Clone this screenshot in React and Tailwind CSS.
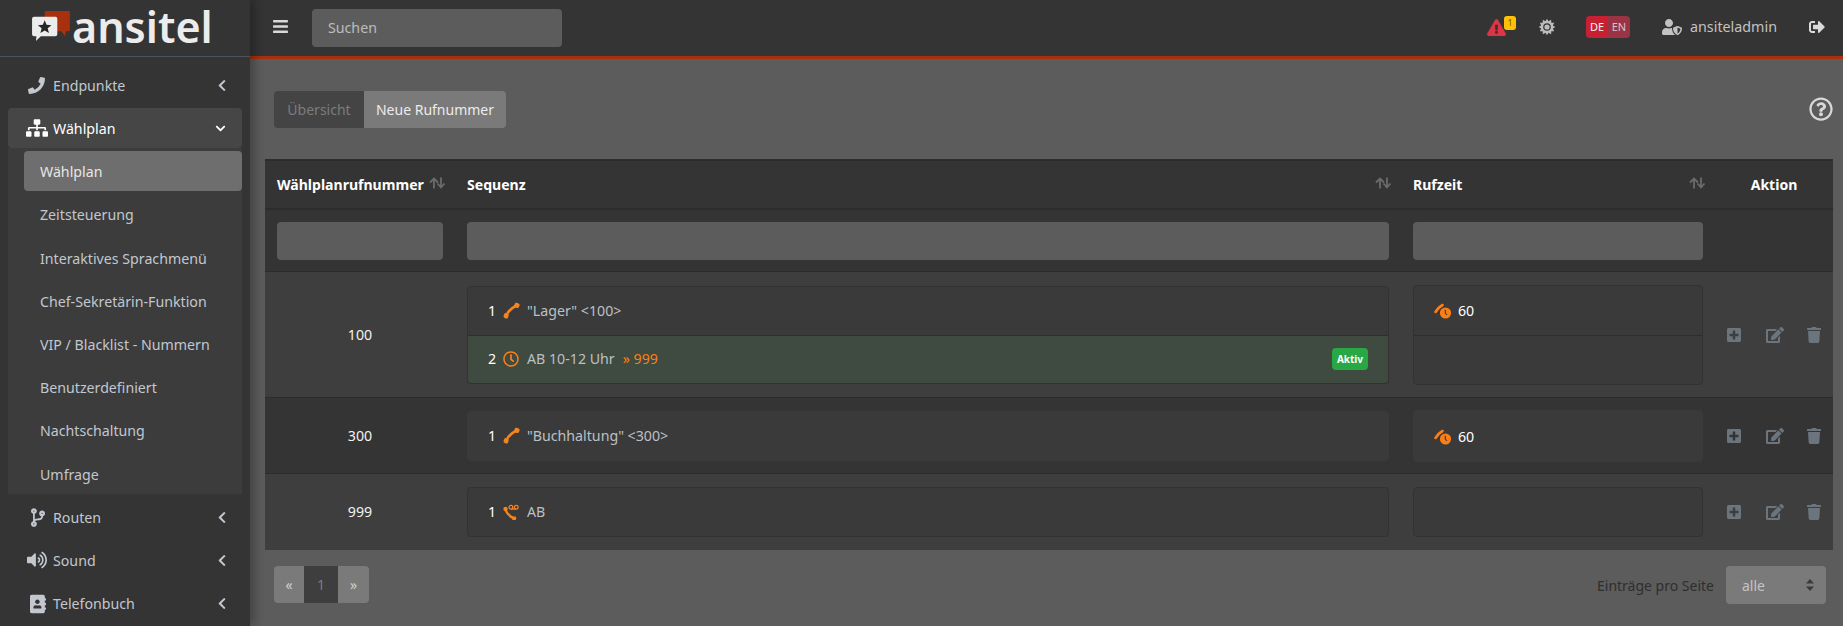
import React from "react";
import { FaPhoneAlt, FaSitemap, FaCodeBranch, FaVolumeUp, FaAddressBook, FaChevronLeft, FaChevronDown, FaBars, FaExclamationTriangle, FaUserShield, FaSignOutAlt, FaRegQuestionCircle, FaPlusSquare, FaEdit, FaTrash, FaRegClock } from "react-icons/fa";

function Handset({ className }) {
  return (
    <svg viewBox="0 0 18 18" className={className} fill="none">
      <path d="M3.5 14 C5.5 10 9 6.5 14 4" stroke="currentColor" strokeWidth="2.8" strokeLinecap="round" />
      <rect x="0.8" y="11.8" width="5" height="5.4" rx="1.8" fill="currentColor" transform="rotate(20 3 14.5)" />
      <rect x="12" y="1" width="5.4" height="5" rx="1.8" fill="currentColor" transform="rotate(20 14.5 3.5)" />
    </svg>
  );
}

function VoicemailHandset({ className }) {
  return (
    <svg viewBox="0 0 18 18" className={className} fill="none">
      <path d="M2.5 6 C4 10 7 13 11 15" stroke="currentColor" strokeWidth="2.6" strokeLinecap="round" />
      <rect x="0.6" y="3.2" width="4.2" height="4.2" rx="1.4" fill="currentColor" />
      <rect x="9.6" y="13.2" width="4.4" height="3.8" rx="1.4" fill="currentColor" />
      <circle cx="8.4" cy="3.4" r="2" stroke="currentColor" strokeWidth="1.3" />
      <circle cx="14" cy="3.4" r="2" stroke="currentColor" strokeWidth="1.3" />
      <path d="M8.4 5.4 H14" stroke="currentColor" strokeWidth="1.3" />
    </svg>
  );
}

function TimeHandset({ className }) {
  return (
    <svg viewBox="0 0 18 16" className={className} fill="none">
      <path d="M1.5 9 C3 6.5 5 4 8.5 2" stroke="currentColor" strokeWidth="2.6" strokeLinecap="round" />
      <circle cx="11.5" cy="10" r="5.6" fill="currentColor" />
      <path d="M11.3 6.8 V10 L13 12" stroke="#3a3a3a" strokeWidth="1.1" />
    </svg>
  );
}

function SortArrows() {
  return (
    <svg viewBox="0 0 17 12" className="w-[17px] h-3 mb-1 text-[#6b6b6b]" fill="none" stroke="currentColor" strokeWidth="1.8">
      <path d="M5 11.5 V2 M1 5.5 L5 1.5 L9 5.5" />
      <path d="M12 0.5 V10 M8.5 6.5 L12 10.5 L15.5 6.5" />
    </svg>
  );
}

function Gear() {
  return (
    <svg viewBox="0 0 16 16" className="w-[18px] h-[18px] text-[#bdbdbd]" fill="currentColor">
      <path d="M8 0.6 L9.3 2.8 L11.7 1.6 L11.8 4.2 L14.4 4.3 L13.2 6.7 L15.4 8 L13.2 9.3 L14.4 11.7 L11.8 11.8 L11.7 14.4 L9.3 13.2 L8 15.4 L6.7 13.2 L4.3 14.4 L4.2 11.8 L1.6 11.7 L2.8 9.3 L0.6 8 L2.8 6.7 L1.6 4.3 L4.2 4.2 L4.3 1.6 L6.7 2.8 Z" />
      <circle cx="8" cy="8" r="3.4" fill="#343434" />
      <circle cx="8" cy="8" r="2.3" />
    </svg>
  );
}

function Logo() {
  return (
    <svg viewBox="0 0 40 34" className="w-[39px] h-[33px] shrink-0 -mt-[3px]">
      <path d="M14 2 Q14 1 15 1 H39 Q40 1 40 2 V20 Q40 22 38 22 H36 L35 27 L31 22 H14 Z" fill="#a8300e" />
      <path d="M3 7 H25 Q27 7 27 9 V25 Q27 27 25 27 H10 L5 32 L5.5 27 H3 Q1 27 1 25 V9 Q1 7 3 7 Z" fill="#ececec" />
      <path d="M14 10.5 L15.9 15.3 L21 15.6 L17.1 18.8 L18.4 23.8 L14 21 L9.6 23.8 L10.9 18.8 L7 15.6 L12.1 15.3 Z" fill="#262626" />
    </svg>
  );
}

function NavItem({ icon, label }) {
  return (
    <div className="h-10 mb-[3.2px] flex items-center pl-5 pr-[15px] text-[#c2c7d0]">
      <span className="w-[25px] flex justify-start">{icon}</span>
      <span className="text-[14.2px] pt-[1px] flex-1">{label}</span>
      <FaChevronLeft className="w-[10px] h-[13px]" />
    </div>
  );
}

function SubItem({ label, active }) {
  return (
    <div className={"h-10 mb-[3.2px] ml-4 pl-[16px] pt-[1px] flex items-center rounded text-[14.2px] " + (active ? "bg-[#6e6e6e] text-[#e6e6e6]" : "text-[#c2c7d0]")}>
      {label}
    </div>
  );
}

function Sidebar() {
  return (
    <aside className="w-[250px] shrink-0 h-[626px] overflow-hidden bg-[#343434] shadow-[4px_0_10px_rgba(0,0,0,0.3)] z-10">
      <div className="h-[57px] flex items-center pl-[31px] gap-[2px] border-b border-[#4b545c]">
        <Logo />
        <span className="text-[43px] leading-[50px] font-semibold text-[#ececec] -mt-[2px]">ansitel</span>
      </div>
      <div className="pt-2 px-2">
        <NavItem icon={<FaPhoneAlt className="w-[17px] h-[17px] -scale-x-100" />} label="Endpunkte" />
        <div className="bg-[#464646] rounded h-10 flex items-center pl-[18px] pr-[15px] text-white">
          <span className="w-[27px]"><FaSitemap className="w-[22px] h-[18px]" /></span>
          <span className="text-[14.2px] pt-[1px] flex-1">Wählplan</span>
          <FaChevronDown className="w-[13px] h-[11px]" />
        </div>
        <div className="bg-[#3c3c3c] pt-[3.2px] h-[346px]">
          <SubItem label="Wählplan" active />
          <SubItem label="Zeitsteuerung" />
          <SubItem label="Interaktives Sprachmenü" />
          <SubItem label="Chef-Sekretärin-Funktion" />
          <SubItem label="VIP / Blacklist - Nummern" />
          <SubItem label="Benutzerdefiniert" />
          <SubItem label="Nachtschaltung" />
          <SubItem label="Umfrage" />
        </div>
        <div className="h-[3px]" />
        <NavItem icon={<FaCodeBranch className="ml-[3px] w-[14px] h-[19px]" />} label="Routen" />
        <NavItem icon={<FaVolumeUp className="w-[20px] h-[18px] -ml-[1px]" />} label="Sound" />
        <NavItem icon={<FaAddressBook className="ml-[2px] w-[16px] h-[20px]" />} label="Telefonbuch" />
      </div>
    </aside>
  );
}

function Topbar() {
  return (
    <header className="h-[59px] shrink-0 bg-[#343434] border-b-[3px] border-[#a8300e] flex items-center">
      <FaBars className="ml-[23px] w-[15px] h-[17px] text-[#d8d8d8] -mt-1" />
      <div className="ml-[24px] w-[250px] h-[38px] rounded bg-[#5c5c5c] flex items-center px-[16px] text-[14.2px] text-[#bcbcbc] -mt-[1px]">Suchen</div>
      <div className="flex-1" />
      <div className="flex items-center -mt-[3px]">
        <div className="relative w-[51px] h-6">
          <FaExclamationTriangle className="absolute left-0 top-[4px] w-[19px] h-[17px] text-[#dc3545]" />
          <span className="absolute left-[17px] top-[1px] w-3 h-[14px] rounded-[3px] bg-[#ffc107] text-[#6b5a10] text-[9px] leading-[14px] text-center">1</span>
        </div>
        <Gear />
        <div className="ml-[30px] flex h-[22px] rounded overflow-hidden text-[11px] leading-[22px]">
          <span className="w-[22px] bg-[#c82033] text-[#f2f2f2] text-center">DE</span>
          <span className="w-[22px] bg-[#9a3344] text-[#d8c4c8] text-center">EN</span>
        </div>
        <FaUserShield className="ml-[32px] w-5 h-4 text-[#c2c2c2]" />
        <span className="ml-[8px] text-[14.3px] text-[#c2c2c2]">ansiteladmin</span>
        <FaSignOutAlt className="ml-[32px] mr-[18px] w-4 h-4 text-[#dadada]" />
      </div>
    </header>
  );
}

const cols = ["w-[190px]", "w-[946px]", "w-[314px]", "w-[118px]"];

function HeadCell({ w, label }) {
  return (
    <div className={w + " shrink-0 pl-3 pr-[9px] flex items-center justify-between"}>
      <span className="text-[14.05px] font-bold text-white">{label}</span>
      <SortArrows />
    </div>
  );
}

function Actions() {
  return (
    <div className={cols[3] + " shrink-0 flex items-center text-[#6c757d]"}>
      <FaPlusSquare className="ml-[12px] w-[14px] h-4" />
      <FaEdit className="ml-[25px] w-[18px] h-4" />
      <FaTrash className="ml-[23px] w-[14px] h-4" />
    </div>
  );
}

function SeqRow({ n, icon, text, extra, active, h, last }) {
  return (
    <div className={h + " flex items-center pl-5 pr-5 text-[14.2px] " + (active ? "bg-[#3f4a40] rounded-b" : "") + (last ? "" : " border-b border-[#2e2e2e]")}>
      <span className="text-white w-[15px]">{n}</span>
      <span className="w-[24px] flex items-center text-[#f6841e]">{icon}</span>
      <span className="text-[#bcc0c4]">{text}</span>
      {extra && <span className="ml-[8px] text-[#fd7e14]">{extra}</span>}
      {active && <span className="ml-auto w-9 h-[22px] rounded-[4px] bg-[#28a745] text-white text-[10px] font-bold leading-[22px] text-center">Aktiv</span>}
    </div>
  );
}

function Box({ className, children }) {
  return <div className={"rounded border bg-[#3a3a3a] overflow-hidden " + (className || "border-[#323232]")}>{children}</div>;
}

function RufZeit({ h }) {
  return (
    <div className={h + " flex items-center pl-5 pt-[2px] text-[14.2px] text-white"}>
      <TimeHandset className="w-[18px] h-[16px] text-[#fd7e14] mr-[6px]" />60
    </div>
  );
}

function Table() {
  return (
    <div className="ml-[15px] w-[1568px] bg-[#343434] text-[14.2px]">
      <div className="h-[51px] flex border-t-2 border-b-2 border-[#2c2c2c]">
        <HeadCell w={cols[0]} label="Wählplanrufnummer" />
        <HeadCell w={cols[1]} label="Sequenz" />
        <HeadCell w={cols[2]} label="Rufzeit" />
        <div className={cols[3] + " shrink-0 flex items-center justify-center text-[14.05px] font-bold text-white"}>Aktion</div>
      </div>
      <div className="h-[62px] flex items-center border-b border-[#2c2c2c]">
        <div className={cols[0] + " shrink-0 px-3"}><div className="h-[38px] rounded bg-[#5c5c5c] w-[166px]" /></div>
        <div className={cols[1] + " shrink-0 px-3"}><div className="h-[38px] rounded bg-[#5c5c5c]" /></div>
        <div className={cols[2] + " shrink-0 px-3"}><div className="h-[38px] rounded bg-[#5c5c5c]" /></div>
      </div>
      <div className="h-[126px] flex items-center bg-[#3e3e3e] border-b border-[#2c2c2c]">
        <div className={cols[0] + " shrink-0 text-center text-[#f2f2f2]"}>100</div>
        <div className={cols[1] + " shrink-0 px-3"}>
          <Box>
            <SeqRow n="1" icon={<Handset className="w-[17px] h-[17px]" />} text={'"Lager" <100>'} h="h-[49px]" />
            <SeqRow n="2" icon={<FaRegClock className="w-[16px] h-[16px] text-[#fd7e14]" />} text="AB 10-12 Uhr" extra="» 999" active h="h-[47px]" last />
          </Box>
        </div>
        <div className={cols[2] + " shrink-0 px-3"}>
          <Box>
            <RufZeit h="h-[49px]" />
            <div className="h-[49px] border-t border-[#2e2e2e]" />
          </Box>
        </div>
        <Actions />
      </div>
      <div className="h-[76px] flex items-center bg-[#343434] border-b border-[#2c2c2c]">
        <div className={cols[0] + " shrink-0 text-center text-[#f2f2f2]"}>300</div>
        <div className={cols[1] + " shrink-0 px-3"}>
          <Box className="border-transparent">
            <SeqRow n="1" icon={<Handset className="w-[17px] h-[17px]" />} text={'"Buchhaltung" <300>'} h="h-[48px]" last />
          </Box>
        </div>
        <div className={cols[2] + " shrink-0 px-3"}>
          <Box className="border-transparent"><RufZeit h="h-[50px]" /></Box>
        </div>
        <Actions />
      </div>
      <div className="h-[76px] flex items-center bg-[#3e3e3e]">
        <div className={cols[0] + " shrink-0 text-center text-[#f2f2f2]"}>999</div>
        <div className={cols[1] + " shrink-0 px-3"}>
          <Box>
            <SeqRow n="1" icon={<VoicemailHandset className="w-[17px] h-[17px]" />} text="AB" h="h-[48px]" last />
          </Box>
        </div>
        <div className={cols[2] + " shrink-0 px-3"}>
          <Box><div className="h-[48px]" /></Box>
        </div>
        <Actions />
      </div>
    </div>
  );
}

function Content() {
  return (
    <main className="flex-1 min-h-0 bg-[#5c5c5c]">
      <div className="pt-[32px] pl-[24px] pr-[14px] h-[100px] flex justify-between">
        <div className="flex h-[37px] rounded overflow-hidden text-[14px] leading-[37px]">
          <span className="w-[90px] bg-[#444444] text-[#7c7c7c] text-center">Übersicht</span>
          <span className="w-[142px] bg-[#7a7a7a] text-[#ececec] text-center">Neue Rufnummer</span>
        </div>
        <FaRegQuestionCircle className="mt-[6px] -mr-[4px] w-6 h-6 text-[#d8d8d8]" />
      </div>
      <Table />
      <div className="mt-4 pl-[24px] pr-[17px] flex justify-between">
        <div className="flex h-[37px] rounded overflow-hidden text-[14px] leading-[37px]">
          <span className="w-[30px] bg-[#7a7a7a] text-[#d0d0d0] text-center">«</span>
          <span className="w-[34px] bg-[#3e3e3e] text-[#7c7c7c] text-center text-[14px]">1</span>
          <span className="w-[31px] bg-[#7a7a7a] text-[#d0d0d0] text-center">»</span>
        </div>
        <div className="flex items-center">
          <span className="text-[14px] text-[#2e2e2e] mr-3">Einträge pro Seite</span>
          <div className="w-[100px] h-[38px] rounded bg-[#7a7a7a] flex items-center justify-between pl-4 pr-3 text-[14px] text-[#c4c4c4]">
            alle
            <svg viewBox="0 0 8 12" className="w-2 h-3 text-[#3a3a3a]" fill="currentColor"><path d="M4 0 L8 4.5 H0 Z M4 12 L8 7.5 H0 Z" /></svg>
          </div>
        </div>
      </div>
    </main>
  );
}

export default function App() {
  return (
    <div className="flex w-[1843px] h-[626px] overflow-hidden" style={{ fontFamily: '"Noto Sans", sans-serif' }}>
      <Sidebar />
      <div className="flex-1 flex flex-col min-w-0">
        <Topbar />
        <Content />
      </div>
    </div>
  );
}
